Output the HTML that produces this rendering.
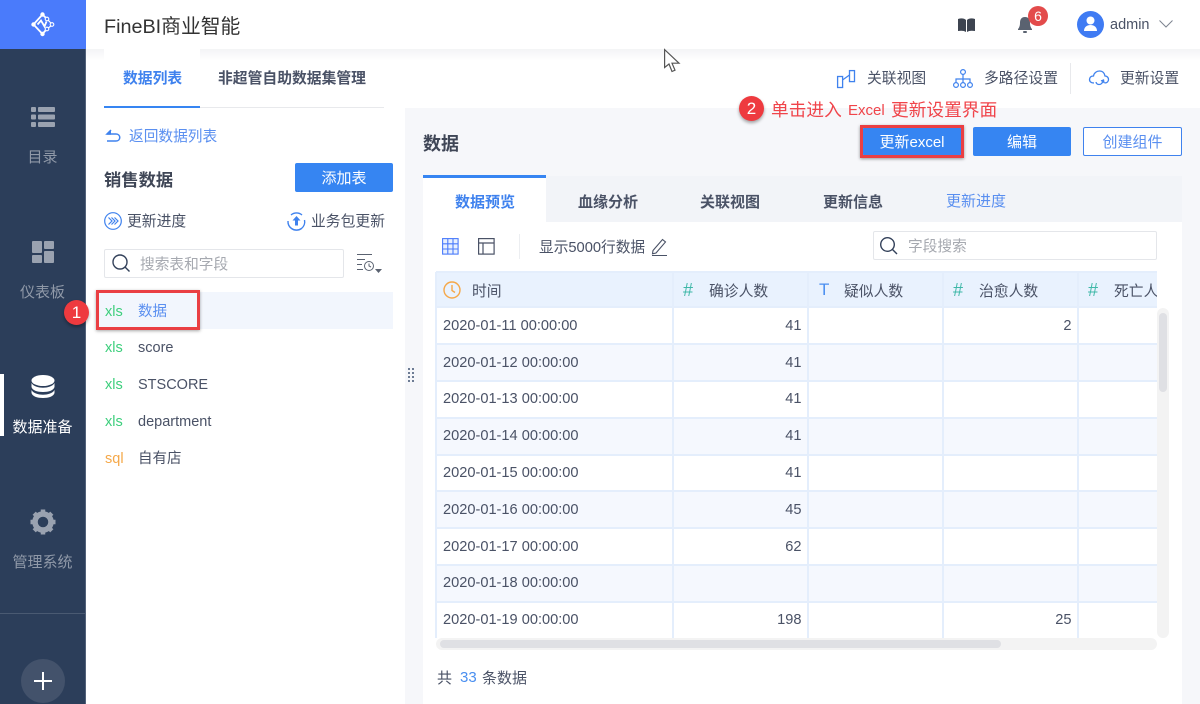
<!DOCTYPE html>
<html><head><meta charset="utf-8"><style>
*{box-sizing:border-box}
html,body{margin:0;padding:0;width:1200px;height:704px;overflow:hidden;background:#fff;font-family:"Liberation Sans","Noto Sans CJK SC",sans-serif;color:#4a5266}
.a{position:absolute;white-space:nowrap}
svg{position:absolute;overflow:visible}
.nav{position:absolute;left:0;width:85px;text-align:center;font-size:15px;color:#9099a8}
.b{font-weight:700}
.btn{position:absolute;background:#3685f2;color:#fff;border-radius:2px;text-align:center;font-size:15px}
.cell{position:absolute;font-size:14.600px;color:#4a5266;white-space:nowrap}
.row{position:absolute;left:436px;width:721px}
.vl{position:absolute;top:272px;height:366px;width:2px;background:#e4eefc}
.hl{position:absolute;left:436px;width:721px;height:2px;background:#e4eefc}
.n{position:absolute;text-align:right;font-size:14.600px;color:#4a5266}
.tab{position:absolute;top:191px;font-size:15px;font-weight:700;color:#4a5266;white-space:nowrap}
</style></head><body>
<!-- top shadow -->
<div class="a" style="left:86px;top:49px;width:1114px;height:12px;background:linear-gradient(#f3f4f6,#fff)"></div>
<div class="a" style="left:104px;top:49px;width:96px;height:12px;background:#fff"></div>
<!-- right panel bg -->
<div class="a" style="left:405px;top:108px;width:795px;height:596px;background:#f6f7fa"></div>
<!-- sidebar -->
<div class="a" style="left:0;top:0;width:85px;height:704px;background:#2c3e5a"></div>
<div class="a" style="left:85px;top:0;width:1px;height:704px;background:#53627a"></div>
<div class="a" style="left:0;top:0;width:86px;height:49px;background:#4a7bfb"></div>
<svg style="left:30px;top:12px" width="26" height="26" viewBox="0 0 26 26" fill="none" stroke="#fff" stroke-width="1.800"><path d="M12.500 2.500L3.500 12.500L12.500 22L15.500 18.500M12.500 2.500L15.500 5.500M7.500 12.500L11 8.500L14.500 14.500L16.500 9.500"/><path d="M18.300 8.300L20.800 11M20.800 14L18.300 16" stroke-width="1.200"/><circle cx="12.500" cy="2.500" r="2.200" fill="#fff" stroke="none"/><circle cx="3.500" cy="12.500" r="2.200" fill="#fff" stroke="none"/><circle cx="12.500" cy="22" r="2.200" fill="#fff" stroke="none"/><circle cx="17" cy="7" r="1.800" stroke-width="1.100"/><circle cx="22" cy="12.500" r="1.800" stroke-width="1.100"/><circle cx="17" cy="17" r="1.800" stroke-width="1.100"/></svg>
<!-- nav icons -->
<svg style="left:31px;top:107px" width="24" height="21" fill="#9aa2b0"><rect width="5" height="5" rx="1"/><rect x="7" width="17" height="5" rx="1"/><rect y="7.500" width="5" height="5" rx="1"/><rect x="7" y="7.500" width="17" height="5" rx="1"/><rect y="15" width="5" height="5" rx="1"/><rect x="7" y="15" width="17" height="5" rx="1"/></svg>
<div class="nav" style="top:146px">目录</div>
<svg style="left:32px;top:241px" width="22" height="22" fill="#9aa2b0"><rect width="10" height="12" rx="1"/><rect x="12" width="10" height="8" rx="1"/><rect y="14" width="10" height="8" rx="1"/><rect x="12" y="10" width="10" height="12" rx="1"/></svg>
<div class="nav" style="top:281px">仪表板</div>
<div class="a" style="left:0;top:374px;width:4px;height:62px;background:#fff"></div>
<svg style="left:31px;top:375px" width="24" height="24" fill="#fff"><ellipse cx="12" cy="5.500" rx="11.500" ry="5.500"/><path d="M.5 8c2 3.500 7 4.700 11.500 4.700S21.500 11.500 23.500 8v4c-1 3.500-6 5-11.500 5S1.500 15.500.5 12z"/><path d="M.5 15c2 3.500 7 4.700 11.500 4.700S21.500 18.500 23.500 15v3c-1 3.500-6 5-11.500 5S1.500 21.500.5 18z"/></svg>
<div class="nav" style="top:416px;color:#fff">数据准备</div>
<svg style="left:30px;top:509px" width="26" height="26" viewBox="0 0 26 26"><circle cx="13" cy="13" r="8" fill="none" stroke="#9aa2b0" stroke-width="5.500"/><g stroke="#9aa2b0" stroke-width="4.500"><path d="M13 .5v3.500M13 22v3.500M.5 13H4M22 13h3.500M4.200 4.200l2.500 2.500M19.300 19.300l2.500 2.500M4.200 21.800l2.500-2.500M19.300 6.700l2.500-2.500"/></g></svg>
<div class="nav" style="top:551px">管理系统</div>
<div class="a" style="left:0;top:613px;width:85px;height:1px;background:#4a5a72"></div>
<div class="a" style="left:21px;top:659px;width:44px;height:44px;border-radius:50%;background:#43526b"></div>
<svg style="left:34px;top:672px" width="18" height="18"><path d="M9 0v18M0 9h18" stroke="#fff" stroke-width="2"/></svg>
<!-- header -->
<div class="a" style="left:104px;top:10px;font-size:19.800px;color:#333">FineBI商业智能</div>
<svg style="left:958px;top:18px" width="17" height="15" fill="#3d4450"><path d="M0 1c3-1 6-1 8 1v12c-2-1.500-5-1.500-8-1zM17 1c-3-1-6-1-8 1v12c2-1.500 5-1.500 8-1z"/></svg>
<svg style="left:1018px;top:17px" width="14" height="16" fill="#5a6270"><path d="M7 0c4 0 5 3 5 6 0 3 1 5 2 6v1H0v-1c1-1 2-3 2-6 0-3 1-6 5-6z"/><rect x="5" y="14" width="4" height="2" rx="1"/></svg>
<div class="a" style="left:1028px;top:6px;width:20px;height:20px;border-radius:50%;background:#e34b4b;color:#fff;font-size:14px;line-height:20px;text-align:center">6</div>
<div class="a" style="left:1077px;top:11px;width:27px;height:27px;border-radius:50%;background:#3f7bf3"></div>
<svg style="left:1084px;top:16px" width="13" height="16" fill="#fff"><circle cx="6.500" cy="4.500" r="4"/><path d="M0 15c0-4 3-6 6.500-6S13 11 13 15z"/></svg>
<div class="a" style="left:1110px;top:17px;font-size:14.500px;color:#4a5266">admin</div>
<svg style="left:1159px;top:20px" width="14" height="8" fill="none" stroke="#7d8490"><path d="M.5.500L7 7 13.500.500"/></svg>
<!-- left tabs -->
<div class="a b" style="left:123px;top:67px;font-size:14.800px;color:#3f82ee">数据列表</div>
<div class="a b" style="left:218px;top:67px;font-size:14.800px;color:#4a5266">非超管自助数据集管理</div>
<div class="a" style="left:104px;top:107px;width:280px;height:1px;background:#e8e9ec"></div>
<div class="a" style="left:104px;top:106px;width:96px;height:2px;background:#3685f2"></div>
<svg style="left:106px;top:129px" width="15" height="13" fill="none" stroke="#3f82ee" stroke-width="1.500"><path d="M1 5h9c5 0 5 7 0 7H1"/><path d="M5 1L1 5l4 0" fill="#3f82ee"/></svg>
<div class="a" style="left:129px;top:125px;font-size:14.700px;color:#5a8ff0">返回数据列表</div>
<div class="a b" style="left:104px;top:166px;font-size:17.300px;color:#3f4656">销售数据</div>
<div class="btn" style="left:295px;top:163px;width:98px;height:29px;line-height:31px">添加表</div>
<svg style="left:104px;top:212px" width="18" height="18" fill="none" stroke="#3f82ee"><circle cx="9" cy="9" r="8.300" stroke-width="1.200"/><path d="M4.500 5.500L8 9l-3.500 3.500M7.500 5.500L11 9l-3.500 3.500M10.500 5.500L14 9l-3.500 3.500" stroke-width="1.200"/></svg>
<div class="a" style="left:127px;top:210px;font-size:14.800px;color:#4a5266">更新进度</div>
<svg style="left:287px;top:212px" width="19" height="19" fill="none" stroke="#3f82ee" stroke-width="1.400"><path d="M4 3a8.500 8.500 0 0 1 11 0M17.500 8a8.500 8.500 0 0 1-3 8.500 8.500 8.500 0 0 1-10 0A8.500 8.500 0 0 1 1 9"/><path d="M9.500 4l4 4.500h-2.500v5h-3v-5H5.500z" fill="#3f82ee" stroke="none"/></svg>
<div class="a" style="left:311px;top:210px;font-size:14.800px;color:#4a5266">业务包更新</div>
<!-- left search -->
<div class="a" style="left:104px;top:249px;width:240px;height:29px;border:1px solid #e4e6ea;border-radius:2px;background:#fff"></div>
<svg style="left:112px;top:254px" width="19" height="19" fill="none" stroke="#33415a" stroke-width="1.400"><circle cx="8" cy="8" r="7"/><path d="M13 13l4.500 4.500"/></svg>
<div class="a" style="left:140px;top:253px;font-size:14.700px;color:#a6a9b0">搜索表和字段</div>
<svg style="left:357px;top:254px" width="25" height="22" fill="none" stroke="#5a6270"><path d="M0 .5h15M0 5.500h8M0 10.500h5M0 15.500h6"/><circle cx="12" cy="12" r="4.500"/><path d="M12 9.500V12l2 1"/><path d="M18 15h7l-3.500 4z" fill="#5a6270" stroke="none"/></svg>
<!-- list -->
<div class="a" style="left:96px;top:292px;width:297px;height:37px;background:#f2f6fd"></div>
<div class="a" style="left:96px;top:290px;width:104px;height:40px;border:3px solid #ea3f43;box-shadow:0 1px 3px rgba(0,0,0,.35)"></div>
<div class="a" style="left:105px;top:304px;font-size:14.500px;color:#3ecf7d">xls</div>
<div class="a" style="left:138px;top:300px;font-size:14.500px;color:#5a8ff0">数据</div>
<div class="a" style="left:105px;top:340px;font-size:14.500px;color:#3ecf7d">xls</div>
<div class="a" style="left:138px;top:340px;font-size:14.500px">score</div>
<div class="a" style="left:105px;top:377px;font-size:14.500px;color:#3ecf7d">xls</div>
<div class="a" style="left:138px;top:377px;font-size:14.500px">STSCORE</div>
<div class="a" style="left:105px;top:414px;font-size:14.500px;color:#3ecf7d">xls</div>
<div class="a" style="left:138px;top:414px;font-size:14.500px">department</div>
<div class="a" style="left:105px;top:451px;font-size:14.500px;color:#f5a849">sql</div>
<div class="a" style="left:138px;top:447px;font-size:14.500px">自有店</div>
<div class="a" style="left:64px;top:300px;width:25px;height:25px;border-radius:50%;background:#ee3a3f;color:#fff;font-size:17px;line-height:25px;text-align:center;box-shadow:0 2px 3px rgba(0,0,0,.35)">1</div>
<!-- splitter -->
<svg style="left:408px;top:368px" width="6" height="16" fill="#6d7c94"><rect width="2" height="2"/><rect x="4" width="2" height="2"/><rect y="4" width="2" height="2"/><rect x="4" y="4" width="2" height="2"/><rect y="8" width="2" height="2"/><rect x="4" y="8" width="2" height="2"/><rect y="12" width="2" height="2"/><rect x="4" y="12" width="2" height="2"/></svg>
<!-- toolbar right -->
<svg style="left:837px;top:70px" width="18" height="18" fill="none" stroke="#3f82ee" stroke-width="1.300"><rect x=".6" y="6.500" width="5" height="11"/><rect x="12.500" y=".6" width="5" height="11"/><path d="M5.500 10l7-5"/></svg>
<div class="a" style="left:867px;top:67px;font-size:14.800px">关联视图</div>
<svg style="left:953px;top:69px" width="20" height="19" fill="none" stroke="#3f82ee" stroke-width="1.200"><circle cx="10" cy="3" r="2.400"/><circle cx="3" cy="16" r="2.400"/><circle cx="10" cy="16" r="2.400"/><circle cx="17" cy="16" r="2.400"/><path d="M10 5.500v8M3 13.500V10h14v3.500"/></svg>
<div class="a" style="left:984px;top:67px;font-size:14.800px">多路径设置</div>
<div class="a" style="left:1070px;top:63px;width:1px;height:31px;background:#e8e9ec"></div>
<svg style="left:1089px;top:70px" width="20" height="18" fill="none" stroke="#3f82ee" stroke-width="1.300"><path d="M5 13C1.500 13 0 11 .7 8.500 1.300 6.500 3 6 4.500 6 5 3 7.500 1 10.500 1c3 0 5 2 5.500 5 2 0 3.500 1.500 3.500 3.500S18 13 15.500 13"/><path d="M7 12c.5 3 5.500 4 7-1M12 11l2.500-1 .5 3"/></svg>
<div class="a" style="left:1120px;top:67px;font-size:14.800px">更新设置</div>
<!-- annotation 2 -->
<div class="a" style="left:739px;top:96px;width:25px;height:25px;border-radius:50%;background:#ee3a3f;color:#fff;font-size:17px;line-height:25px;text-align:center;box-shadow:0 2px 3px rgba(0,0,0,.35)">2</div>
<div class="a" style="left:771px;top:96px;font-size:17.700px;color:#f0444a">单击进入</div>
<div class="a" style="left:848px;top:102px;font-size:15px;color:#f0444a">Excel</div>
<div class="a" style="left:891px;top:96px;font-size:17.700px;color:#f0444a">更新设置界面</div>
<!-- title -->
<div class="a b" style="left:423px;top:130px;font-size:18px;color:#3f4656">数据</div>
<div class="btn" style="left:863px;top:127px;width:98px;height:29px;line-height:31px">更新excel</div>
<div class="a" style="left:860px;top:125px;width:104px;height:33px;border:3px solid #ea3f43;box-shadow:0 1px 3px rgba(0,0,0,.4)"></div>
<div class="btn" style="left:973px;top:127px;width:98px;height:29px;line-height:31px">编辑</div>
<div class="a" style="left:1083px;top:127px;width:99px;height:29px;line-height:29px;border:1px solid #3f82ee;border-radius:2px;background:#fff;text-align:center;font-size:15px;color:#5a8ff0">创建组件</div>
<!-- tab panel -->
<div class="a" style="left:423px;top:176px;width:759px;height:46px;background:#f2f4f8"></div>
<div class="a" style="left:423px;top:222px;width:759px;height:482px;background:#fff"></div>
<div class="a" style="left:423px;top:175px;width:123px;height:47px;background:#fff;border-top:3px solid #3685f2"></div>
<div class="tab" style="left:455px;color:#3f82ee">数据预览</div>
<div class="tab" style="left:578px">血缘分析</div>
<div class="tab" style="left:700px">关联视图</div>
<div class="tab" style="left:823px">更新信息</div>
<div class="tab" style="left:946px;top:190px;color:#5a8ff0;font-weight:400">更新进度</div>
<!-- table toolbar -->
<svg style="left:442px;top:238px" width="17" height="17" fill="none" stroke="#4a7bfb" stroke-width="1.100"><rect x=".6" y=".6" width="15.500" height="15.500" fill="#e8f0fe"/><path d="M5.800.6v15.500M11 .6v15.500M.6 5.800h15.500M.6 11h15.500"/></svg>
<svg style="left:478px;top:238px" width="17" height="17" fill="none" stroke="#4a5266" stroke-width="1.200"><rect x=".6" y=".6" width="15.500" height="15.500"/><path d="M.6 5h15.500M5 5v11"/></svg>
<div class="a" style="left:519px;top:234px;width:1px;height:25px;background:#eceef1"></div>
<div class="a" style="left:539px;top:236px;font-size:14.700px;color:#4a5266">显示5000行数据</div>
<svg style="left:652px;top:238px" width="16" height="18" fill="none" stroke="#4a5266" stroke-width="1.100"><path d="M1 12.500L10.500 1.500l3 2.500L4 15l-3.500 .8zM0 17.500h15"/></svg>
<div class="a" style="left:873px;top:231px;width:284px;height:29px;border:1px solid #e4e6ea;border-radius:2px;background:#fff"></div>
<svg style="left:880px;top:237px" width="18" height="18" fill="none" stroke="#33415a" stroke-width="1.400"><circle cx="7.500" cy="7.500" r="6.800"/><path d="M12.500 12.500l4.500 4.500"/></svg>
<div class="a" style="left:908px;top:235px;font-size:14.700px;color:#a6a9b0">字段搜索</div>
<!-- table -->
<div class="a" style="left:436px;top:272px;width:721px;height:366px;overflow:hidden;background:#fff"></div>
<div class="row" style="top:272px;height:35px;background:#e9f2fe"></div>
<div class="row" style="top:344px;height:37px;background:#f5f8fe"></div>
<div class="row" style="top:417px;height:37px;background:#f5f8fe"></div>
<div class="row" style="top:491px;height:37px;background:#f5f8fe"></div>
<div class="row" style="top:565px;height:37px;background:#f5f8fe"></div>
<div class="hl" style="top:271px"></div>
<div class="hl" style="top:306px"></div>
<div class="hl" style="top:343px"></div>
<div class="hl" style="top:380px"></div>
<div class="hl" style="top:417px"></div>
<div class="hl" style="top:454px"></div>
<div class="hl" style="top:490px"></div>
<div class="hl" style="top:527px"></div>
<div class="hl" style="top:564px"></div>
<div class="hl" style="top:601px"></div>
<div class="vl" style="left:435px"></div>
<div class="vl" style="left:672px"></div>
<div class="vl" style="left:807px"></div>
<div class="vl" style="left:942px"></div>
<div class="vl" style="left:1077px"></div>
<svg style="left:443px;top:281px" width="18" height="18" fill="none" stroke="#f5a849" stroke-width="1.400"><circle cx="9" cy="9" r="8"/><path d="M9 4v5.500l3 2"/></svg>
<div class="a" style="left:472px;top:280px;font-size:14.800px">时间</div>
<div class="a" style="left:683px;top:280px;font-size:18px;color:#3fb8a8">#</div>
<div class="a" style="left:709px;top:280px;font-size:14.800px">确诊人数</div>
<div class="a" style="left:819px;top:280px;font-size:17px;color:#4a8ff0">T</div>
<div class="a" style="left:844px;top:280px;font-size:14.800px">疑似人数</div>
<div class="a" style="left:953px;top:280px;font-size:18px;color:#3fb8a8">#</div>
<div class="a" style="left:979px;top:280px;font-size:14.800px">治愈人数</div>
<div class="a" style="left:1088px;top:280px;font-size:18px;color:#3fb8a8">#</div>
<div class="a" style="left:1114px;top:280px;width:43px;overflow:hidden;font-size:14.800px">死亡人数</div>
<div class="cell" style="left:443px;top:318px">2020-01-11 00:00:00</div>
<div class="cell" style="left:443px;top:355px">2020-01-12 00:00:00</div>
<div class="cell" style="left:443px;top:391px">2020-01-13 00:00:00</div>
<div class="cell" style="left:443px;top:428px">2020-01-14 00:00:00</div>
<div class="cell" style="left:443px;top:465px">2020-01-15 00:00:00</div>
<div class="cell" style="left:443px;top:502px">2020-01-16 00:00:00</div>
<div class="cell" style="left:443px;top:539px">2020-01-17 00:00:00</div>
<div class="cell" style="left:443px;top:575px">2020-01-18 00:00:00</div>
<div class="cell" style="left:443px;top:612px">2020-01-19 00:00:00</div>
<div class="n" style="left:740px;width:61.500px;top:318px">41</div>
<div class="n" style="left:740px;width:61.500px;top:355px">41</div>
<div class="n" style="left:740px;width:61.500px;top:391px">41</div>
<div class="n" style="left:740px;width:61.500px;top:428px">41</div>
<div class="n" style="left:740px;width:61.500px;top:465px">41</div>
<div class="n" style="left:740px;width:61.500px;top:502px">45</div>
<div class="n" style="left:740px;width:61.500px;top:539px">62</div>
<div class="n" style="left:740px;width:61.500px;top:612px">198</div>
<div class="n" style="left:1010px;width:61.500px;top:318px">2</div>
<div class="n" style="left:1010px;width:61.500px;top:612px">25</div>
<!-- scrollbars -->
<div class="a" style="left:1157px;top:308px;width:12px;height:330px;background:#f3f3f3;border-radius:6px"></div>
<div class="a" style="left:1159px;top:313px;width:8px;height:79px;background:#dfe0e4;border-radius:4px"></div>
<div class="a" style="left:436px;top:638px;width:721px;height:12px;background:#f3f3f3;border-radius:6px"></div>
<div class="a" style="left:440px;top:640px;width:561px;height:8px;background:#dfe0e4;border-radius:4px"></div>
<!-- footer -->
<div class="a" style="left:437px;top:667px;font-size:15px">共</div>
<div class="a" style="left:460px;top:669px;font-size:15px;color:#4a8ff0">33</div>
<div class="a" style="left:482px;top:667px;font-size:15px">条数据</div>
<!-- cursor -->
<svg style="left:664px;top:49px" width="17" height="25" fill="#fff" stroke="#555" stroke-width="1.200"><path d="M.6.600V18.500L5 15l3 7.500 3-1.300-3-7h7z"/></svg>
</body></html>
